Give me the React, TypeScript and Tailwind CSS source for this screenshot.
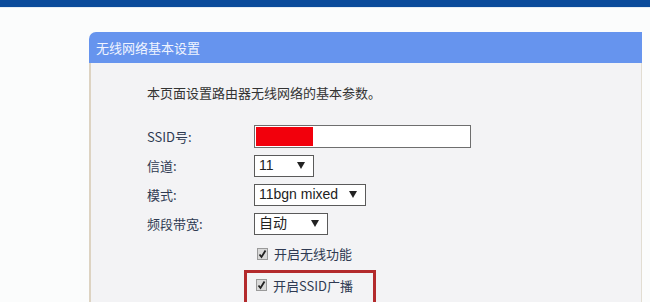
import React from 'react';

const font = { fontFamily: '"Noto Sans CJK SC", "Noto Sans", sans-serif' };

const Arrow = () => (
  <svg width="8" height="7" viewBox="0 0 8 7" className="shrink-0">
    <path d="M0 0 H8 L4 7 Z" fill="#222" />
  </svg>
);

const Select: React.FC<{ value: string; width: string }> = ({ value, width }) => (
  <div
    className={`${width} h-[22px] bg-white border border-[#5a5a5a] flex items-center justify-between pl-[4px] pr-[8px] text-[14px] text-[#222]`}
    style={{ fontFamily: '"Liberation Sans", "Noto Sans CJK SC", sans-serif' }}
  >
    <span>{value}</span>
    <Arrow />
  </div>
);

const Check = () => (
  <svg width="11" height="12" viewBox="0 0 11 12" className="shrink-0">
    <rect x="0.5" y="0.5" width="10" height="11" fill="#d9d9d9" stroke="#9a9a9a" />
    <path d="M2.5 6.5 L4.5 9 L8.5 2.5" fill="none" stroke="#222" strokeWidth="1.8" />
  </svg>
);

export default function App() {
  const rows = [
    { label: '信道:', control: <Select value="11" width="w-[60px]" /> },
    { label: '模式:', control: <Select value="11bgn mixed" width="w-[112px]" /> },
    { label: '频段带宽:', control: <Select value="自动" width="w-[74px]" /> },
  ];

  return (
    <div className="w-[650px] h-[302px] overflow-hidden bg-[#fbfcfc] flex flex-col" style={font}>
      <div className="h-[7px] bg-[#0b4b9b] shrink-0" />
      <div className="h-[1px] bg-[#e4edf5] shrink-0" />
      <div className="pt-[24px] pl-[89px]">
        <div className="w-[553px] h-[300px] flex flex-col">
          <div className="h-[31px] bg-[#6694ee] rounded-tl-[7px] flex items-center pl-[7px] text-[13px] text-[#f0f4ff]">
            无线网络基本设置
          </div>
          <div className="flex-1 bg-[#f3f3f5] border-l-2 border-r border-l-[#ddd3c2] border-r-[#e2ddd2] pl-[56px] pt-[20px]">
            <div className="h-[20px] leading-[20px] text-[13px] text-[#333]">本页面设置路由器无线网络的基本参数。</div>
            <div className="mt-[19px] flex flex-col">
              <div className="h-[29px] flex items-center">
                <div className="w-[107px] text-[13px] text-[#2f3a52]">SSID号:</div>
                <div className="w-[217px] h-[23px] bg-white border border-[#6e6e6e] p-[1px]">
                  <div className="w-[57px] h-full bg-[#f2000c]" />
                </div>
              </div>
              {rows.map((r) => (
                <div key={r.label} className="h-[29px] flex items-center">
                  <div className="w-[107px] text-[13px] text-[#2f3a52]">{r.label}</div>
                  {r.control}
                </div>
              ))}
              <div className="h-[32px] flex items-center pl-[110px] gap-[6px]">
                <Check />
                <span className="text-[13px] text-[#2f3a52]">开启无线功能</span>
              </div>
              <div className="ml-[97px] w-[132px] h-[40px] border-[3px] border-[#b32a2c] pl-[9px] pt-[6px] flex items-start gap-[6px]">
                <Check />
                <span className="text-[13px] leading-[13px] text-[#2f3a52]">开启SSID广播</span>
              </div>
            </div>
          </div>
        </div>
      </div>
    </div>
  );
}
